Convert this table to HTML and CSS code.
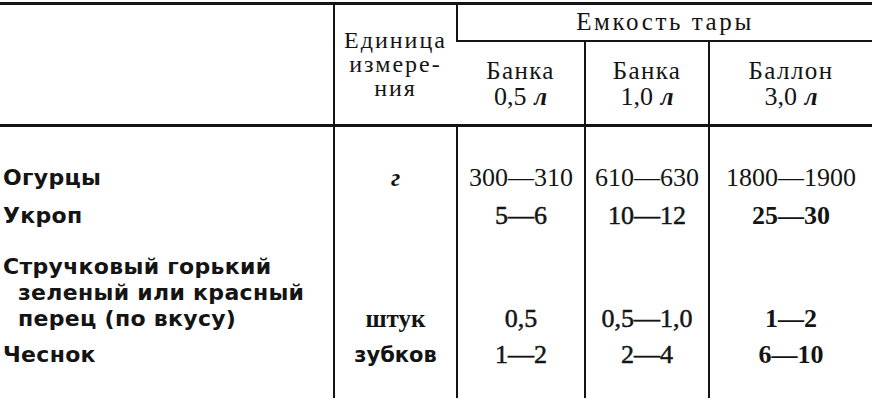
FILE: index.html
```html
<!DOCTYPE html>
<html lang="ru">
<head>
<meta charset="utf-8">
<title>Емкость тары</title>
<link rel="stylesheet" href="styles.css">
</head>
<body>
<table class="tbl">
  <colgroup>
    <col class="c-name">
    <col class="c-unit">
    <col class="c-a">
    <col class="c-b">
    <col class="c-c">
  </colgroup>
  <thead>
    <tr class="h1">
      <th class="h-name" rowspan="2"></th>
      <th class="h-unit" rowspan="2">Единица<br>измере-<br>ния</th>
      <th class="h-cap" colspan="3">Емкость тары</th>
    </tr>
    <tr class="h2">
      <th class="h-sub">Банка<br><span class="num">0,5</span> <i class="lit">л</i></th>
      <th class="h-sub">Банка<br><span class="num">1,0</span> <i class="lit">л</i></th>
      <th class="h-sub">Баллон<br><span class="num">3,0</span> <i class="lit">л</i></th>
    </tr>
  </thead>
  <tbody>
    <tr class="r1">
      <td class="name">Огурцы</td>
      <td class="unit"><i class="g">г</i></td>
      <td class="val">300—310</td>
      <td class="val">610—630</td>
      <td class="val">1800—1900</td>
    </tr>
    <tr class="r2">
      <td class="name">Укроп</td>
      <td class="unit"></td>
      <td class="val med">5—6</td>
      <td class="val med">10—12</td>
      <td class="val bold">25—30</td>
    </tr>
    <tr class="r3">
      <td class="name hang">Стручковый горький<br>зеленый или красный<br>перец (по вкусу)</td>
      <td class="unit serif-b">штук</td>
      <td class="val med">0,5</td>
      <td class="val med">0,5—1,0</td>
      <td class="val bold">1—2</td>
    </tr>
    <tr class="r4">
      <td class="name">Чеснок</td>
      <td class="unit sans-b">зубков</td>
      <td class="val med">1—2</td>
      <td class="val med">2—4</td>
      <td class="val bold">6—10</td>
    </tr>
  </tbody>
</table>
</body>
</html>
```
FILE: styles.css
```css
html, body {
  margin: 0;
  padding: 0;
  background: #ffffff;
}
body {
  color: #141414;
  font-family: "Liberation Serif", "Times New Roman", serif;
}
.tbl {
  margin-top: 2px;
  width: 872px;
  border-collapse: collapse;
  table-layout: fixed;
  border-top: 3px solid #141414;
}
.c-name { width: 334px; }
.c-unit { width: 123px; }
.c-a { width: 128px; }
.c-b { width: 124px; }
.c-c { width: 163px; }

th, td {
  padding: 0;
  font-weight: normal;
  line-height: 25px;
}
th + th, td + td {
  border-left: 2px solid #141414;
}
thead {
  border-bottom: 3px solid #141414;
}
.h1 { height: 37px; }
.h2 { height: 85px; }
.h-unit {
  vertical-align: top;
  padding-top: 23px;
  font-size: 24px;
  line-height: 24px;
  letter-spacing: 2px;
  text-align: center;
}
.h-cap {
  border-bottom: 2px solid #141414;
  font-size: 25px;
  letter-spacing: 2.6px;
  vertical-align: middle;
  text-align: center;
  padding-bottom: 2px;
}
.h-sub {
  vertical-align: top;
  padding-top: 16px;
  font-size: 25px;
  line-height: 26px;
  letter-spacing: 1.4px;
  text-align: center;
}
.h-sub .num { letter-spacing: 0; font-size: 26px; }
.lit {
  font-weight: bold;
  font-style: italic;
  letter-spacing: 0;
}

td {
  vertical-align: bottom;
  line-height: 26px;
}
.r1 td { padding-top: 38px; }
.r2 td { padding-top: 12px; }
.r3 td { padding-top: 25px; }
.r4 td { padding-top: 10px; padding-bottom: 30px; }

.name {
  font-family: "DejaVu Sans", "Liberation Sans", sans-serif;
  font-weight: bold;
  font-size: 22px;
  letter-spacing: 0.3px;
  padding-left: 3px;
  text-align: left;
}
.hang {
  padding-left: 18px;
  text-indent: -15px;
}
.unit {
  text-align: center;
  font-size: 25px;
}
.g { font-style: italic; font-weight: bold; }
.serif-b { font-weight: bold; }
.sans-b {
  font-family: "DejaVu Sans", "Liberation Sans", sans-serif;
  font-weight: bold;
  font-size: 21px;
}
.val {
  text-align: center;
  font-size: 26px;
}
.med { -webkit-text-stroke: 0.5px #141414; }
.bold { font-weight: bold; }
```
